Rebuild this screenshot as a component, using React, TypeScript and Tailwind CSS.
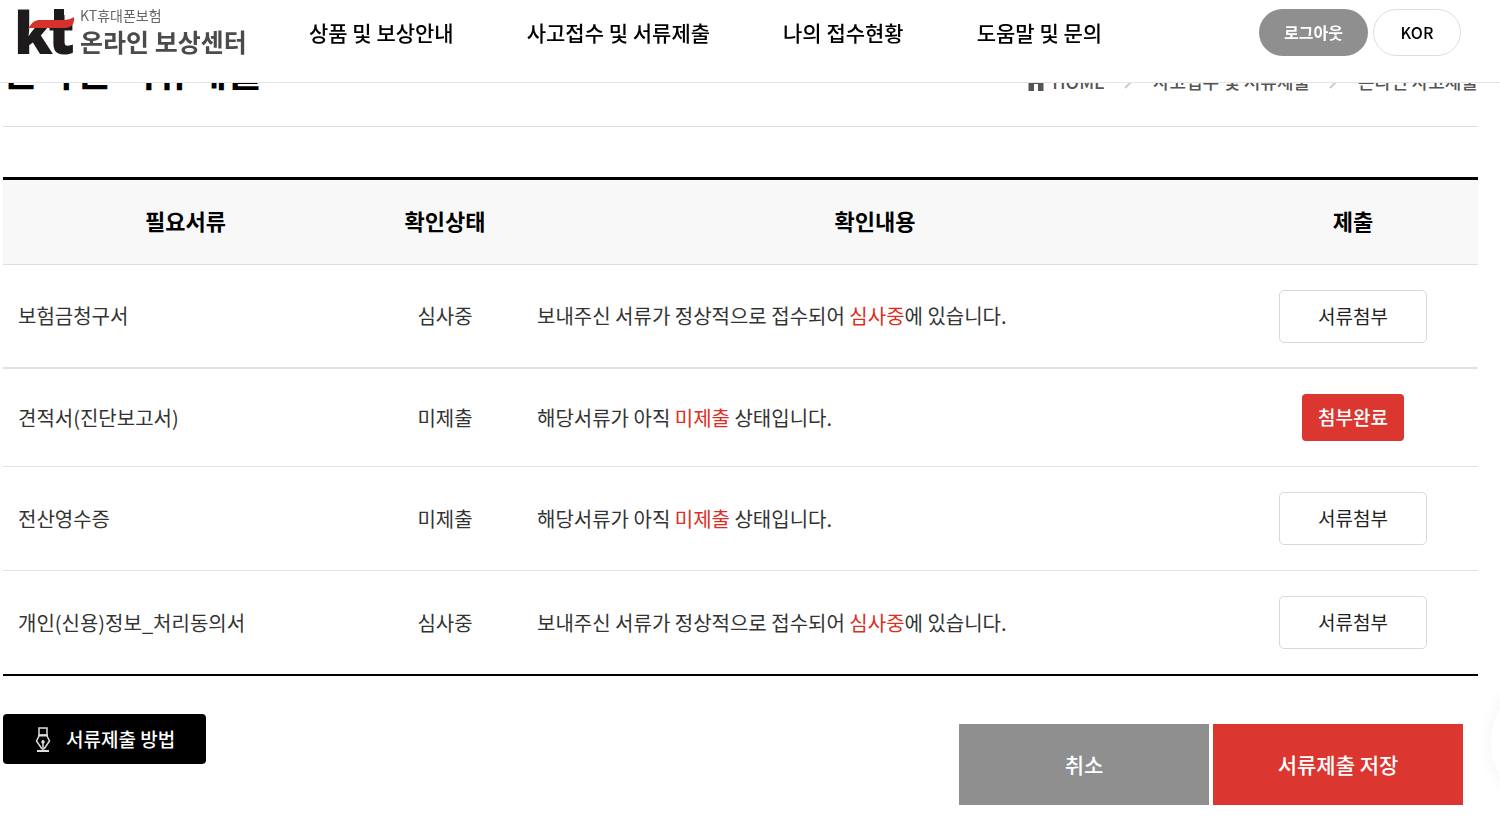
import React from 'react';

const NAV_ITEMS = ['상품 및 보상안내', '사고접수 및 서류제출', '나의 접수현황', '도움말 및 문의'];

interface DocumentRow {
  name: string;
  status: '심사중' | '미제출';
  attached: boolean;
  rowClass: string;
}

const DOCUMENTS: DocumentRow[] = [
  { name: '보험금청구서', status: '심사중', attached: false, rowClass: 'h-[104px] border-b-2' },
  { name: '견적서(진단보고서)', status: '미제출', attached: true, rowClass: 'h-[98px] border-b' },
  { name: '전산영수증', status: '미제출', attached: false, rowClass: 'h-[104px] border-b' },
  { name: '개인(신용)정보_처리동의서', status: '심사중', attached: false, rowClass: 'h-[103px]' },
];

const Logo: React.FC = () => (
  <a href="#" className="flex w-[292px] shrink-0 items-start pl-[17px]">
    <svg width="58" height="48" viewBox="0 0 58 48" className="mt-[8px] shrink-0 overflow-visible" aria-hidden="true">
      <text x="-3" y="46" fontFamily="Open Sans, sans-serif" fontWeight="800" fontSize="59" fill="#1f1b1c">k</text>
      <text x="31" y="46" fontFamily="Open Sans, sans-serif" fontWeight="800" fontSize="58" fill="#1f1b1c">t</text>
      <rect x="37" y="1" width="10" height="32" fill="#1f1b1c" />
      <path d="M11 21 C15 14 18 12 23 12 H45 C51 12 54 11 57 9 C58 16 54 20 48 20 H11 Z" fill="#d6312b" />
    </svg>
    <span className="ml-[5px] mt-[6px] flex flex-col whitespace-nowrap">
      <span className="text-[14px] leading-[18px] text-[#666]">KT휴대폰보험</span>
      <span className="text-[25px] font-bold leading-[34px] text-[#4d4a4a]">온라인 보상센터</span>
    </span>
  </a>
);

const Header: React.FC = () => (
  <header className="fixed inset-x-0 top-0 z-10 flex h-[83px] items-start border-b border-[#e5e5e5] bg-white">
    <Logo />
    <nav className="ml-[17px] flex gap-[73px] whitespace-nowrap pt-[16px] text-[21px] font-medium leading-[32px]">
      {NAV_ITEMS.map((item) => (
        <a key={item} href="#">{item}</a>
      ))}
    </nav>
    <div className="ml-auto mr-[39px] flex gap-[5px] pt-[9px] text-[16px] font-medium leading-[24px]">
      <button className="h-[47px] w-[109px] rounded-full bg-[#8f8f8f] pb-[2px] font-bold text-white">로그아웃</button>
      <button className="h-[47px] w-[88px] rounded-full border border-[#ddd] bg-white pb-[2px]">KOR</button>
    </div>
  </header>
);

const Slash: React.FC = () => (
  <svg width="10" height="18" viewBox="0 0 10 18" aria-hidden="true">
    <path d="M1 16 L10 7" stroke="#ccc" strokeWidth="2" />
  </svg>
);

const TitleBar: React.FC = () => (
  <div className="flex h-[87px] items-start justify-between whitespace-nowrap border-b border-[#ddd]">
    <h1 className="text-[39px] font-bold leading-[58px]">온라인 서류제출</h1>
    <nav className="flex items-center gap-[19px] pt-[27px] text-[18px] font-medium leading-[28px] text-[#555]">
      <a href="#" className="flex items-center gap-[7px]">
        <svg width="18" height="20" viewBox="0 0 18 20" fill="#555" aria-hidden="true">
          <path d="M9 2 L18 10 H16.500 V20 H11 V13 H7 V20 H1.500 V10 H0 Z" />
        </svg>
        HOME
      </a>
      <Slash />
      <a href="#">사고접수 및 서류제출</a>
      <Slash />
      <a href="#">온라인 사고제출</a>
    </nav>
  </div>
);

const StatusMessage: React.FC<{ status: DocumentRow['status'] }> = ({ status }) => {
  if (status === '심사중') {
    return <>보내주신 서류가 정상적으로 접수되어 <span className="text-[#e02b20]">심사중</span>에 있습니다.</>;
  }
  return <>해당서류가 아직 <span className="text-[#e02b20]">미제출</span> 상태입니다.</>;
};

const DocumentTable: React.FC = () => (
  <table className="mt-[50px] w-full table-fixed border-separate border-spacing-0 border-b-2 border-t-[3px] border-black text-[20px] text-[#333]">
    <thead>
      <tr className="text-[22px] text-black [&>th]:h-[85px] [&>th]:border-b [&>th]:border-[#ddd] [&>th]:bg-[#f8f8f8] [&>th]:pb-[3px] [&>th]:font-bold">
        <th scope="col" className="w-[365px]">필요서류</th>
        <th scope="col" className="w-[154px]">확인상태</th>
        <th scope="col">확인내용</th>
        <th scope="col" className="w-[250px]">제출</th>
      </tr>
    </thead>
    <tbody>
      {DOCUMENTS.map((doc) => {
        const cell = `border-[#dee2e6] px-[15px] ${doc.rowClass}`;
        return (
          <tr key={doc.name}>
            <td className={cell}>{doc.name}</td>
            <td className={`${cell} text-center`}>{doc.status}</td>
            <td className={cell}><StatusMessage status={doc.status} /></td>
            <td className={`${cell} text-center`}>
              {doc.attached ? (
                <button className="mx-auto block h-[47px] w-[102px] rounded bg-[#db3730] text-[19px] font-medium text-white">첨부완료</button>
              ) : (
                <button className="mx-auto block h-[53px] w-[148px] rounded-[5px] border border-[#d9d9d9] bg-white text-[19px] text-[#222]">서류첨부</button>
              )}
            </td>
          </tr>
        );
      })}
    </tbody>
  </table>
);

const PenIcon: React.FC = () => (
  <svg width="16" height="26" viewBox="0 0 16 26" fill="none" stroke="#ddd" strokeWidth="1.500" aria-hidden="true">
    <path d="M4 2 H12 V9 H4 Z" />
    <path d="M3 9.500 H13" strokeWidth="2" />
    <path d="M4 10 L1.500 15 L7 23 M12 10 L14.500 15 L9 23" />
    <path d="M8 14 V25" />
    <circle cx="8" cy="16" r="1" fill="#ddd" />
    <path d="M2 25 H14" strokeWidth="2" />
  </svg>
);

const Actions: React.FC = () => (
  <div className="mt-[38px] flex items-start justify-between">
    <button className="flex h-[50px] w-[203px] items-center gap-[15px] rounded bg-black pl-[32px] text-[19px] font-medium text-white">
      <PenIcon />
      서류제출 방법
    </button>
    <div className="mr-[15px] mt-[10px] flex gap-1 text-[21px] font-medium text-white">
      <button className="h-[81px] w-[250px] bg-[#8f8f8f]">취소</button>
      <button className="h-[81px] w-[250px] bg-[#db3730]">서류제출 저장</button>
    </div>
  </div>
);

const App: React.FC = () => (
  <div className="bg-white font-['Noto_Sans_CJK_KR',sans-serif] text-black">
    <Header />
    <main className="pb-7 pl-[3px] pr-[22px] pt-10">
      <TitleBar />
      <DocumentTable />
      <Actions />
    </main>
    <button
      aria-label="채팅 상담"
      className="fixed -right-[127px] bottom-[23px] size-[136px] rounded-full bg-white shadow-[0_0_18px_rgba(0,0,0,0.05)]"
    />
  </div>
);

export default App;
